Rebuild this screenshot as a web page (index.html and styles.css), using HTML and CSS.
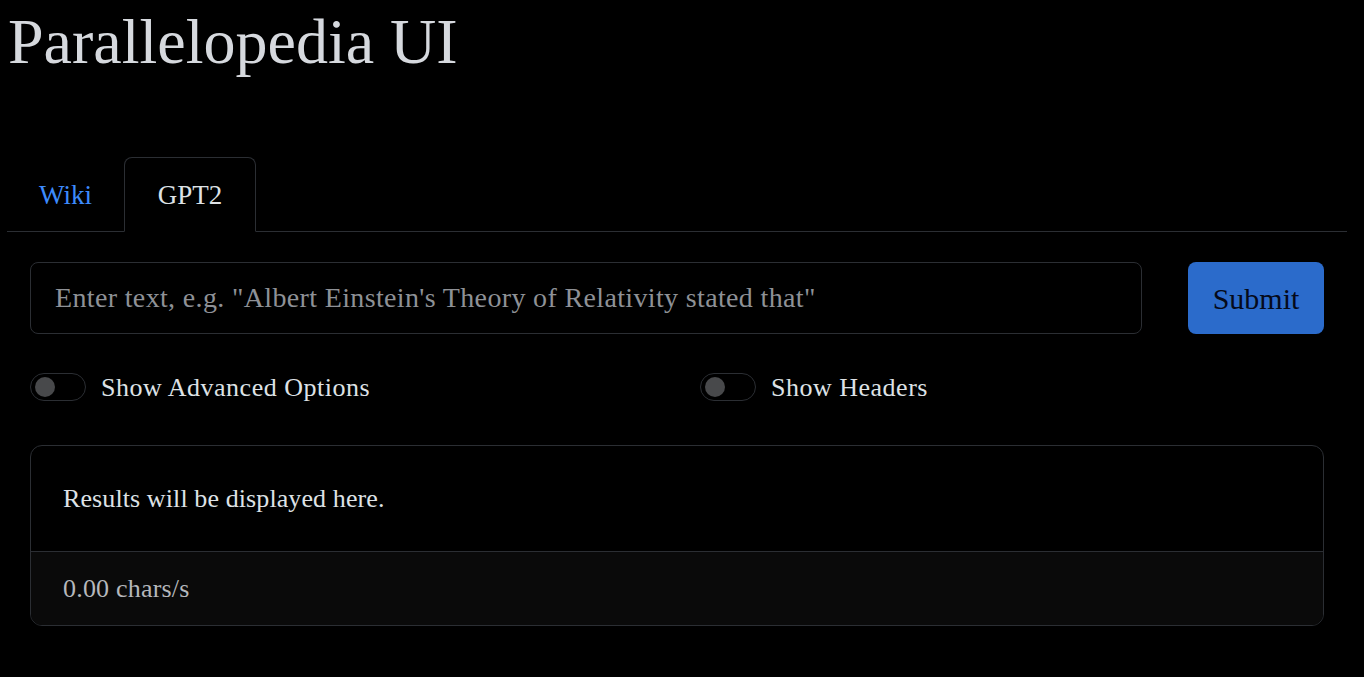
FILE: index.html
```
<!DOCTYPE html>
<html lang="en">
<head>
<meta charset="utf-8">
<title>Parallelopedia UI</title>
<link rel="stylesheet" href="styles.css">
</head>
<body>
<div class="page">
  <h1 class="title">Parallelopedia UI</h1>
  <nav class="tabs">
    <a class="tab" href="#">Wiki</a>
    <a class="tab tab-active" href="#">GPT2</a>
  </nav>
  <section class="panel">
    <div class="query-row">
      <div class="query-input">Enter text, e.g. "Albert Einstein's Theory of Relativity stated that"</div>
      <button class="submit">Submit</button>
    </div>
    <div class="switch-row">
      <label class="switch"><span class="track"><span class="knob"></span></span><span class="switch-label">Show Advanced Options</span></label>
      <label class="switch"><span class="track"><span class="knob"></span></span><span class="switch-label">Show Headers</span></label>
    </div>
    <div class="card">
      <div class="card-body">Results will be displayed here.</div>
      <div class="card-footer">0.00 chars/s</div>
    </div>
  </section>
</div>
</body>
</html>
```
FILE: styles.css
```
html, body {
  margin: 0;
  padding: 0;
  background: #000;
}
body {
  font-family: "Liberation Serif", "DejaVu Serif", serif;
  color: #dee2e6;
}
.page {
  padding: 0 17px 0 7px;
}
.title {
  margin: 0;
  padding: 0 0 0 1px;
  font-weight: 400;
  font-size: 64px;
  line-height: 84px;
  color: #d6d9de;
  height: 157px;
  box-sizing: border-box;
}
.tabs {
  display: flex;
  border-bottom: 1px solid #2b2e33;
  height: 74px;
}
.tab {
  display: flex;
  align-items: center;
  justify-content: center;
  font-size: 27px;
  color: #3d8bfd;
  text-decoration: none;
  border: 1px solid transparent;
  border-radius: 8px 8px 0 0;
  margin-bottom: -1px;
  width: 117px;
  padding: 2px 0 0;
  box-sizing: border-box;
}
.tab-active {
  width: 132px;
  color: #dee2e6;
  border-color: #2b2e33 #2b2e33 #000;
  background: #000;
}
.panel {
  padding: 30px 23px 0 23px;
}
.query-row {
  display: flex;
  gap: 46px;
  height: 72px;
}
.query-input {
  flex: 1;
  display: flex;
  align-items: center;
  padding: 0 24px;
  border: 1px solid #2b2e33;
  border-radius: 8px;
  font-size: 28px;
  letter-spacing: 0.35px;
  color: #8e9196;
  white-space: nowrap;
  overflow: hidden;
}
.submit {
  width: 136px;
  border: none;
  border-radius: 8px;
  background: #2b6bcb;
  color: #050a1a;
  font-family: inherit;
  font-size: 30px;
  padding: 2px 0 0;
}
.switch-row {
  display: flex;
  margin-top: 38px;
  height: 29px;
}
.switch {
  flex: none;
  display: flex;
  align-items: center;
  gap: 15px;
  width: 670px;
  font-size: 26px;
  letter-spacing: 0.5px;
  color: #dee2e6;
}
.track {
  height: 26px;
  border: 1px solid #2b2e33;
  border-radius: 14px;
  display: flex;
  align-items: center;
  padding-left: 4px;
  box-sizing: content-box;
  width: 50px;
}
.knob {
  width: 20px;
  height: 20px;
  border-radius: 50%;
  background: #48494b;
}
.switch-label {
  padding-top: 2px;
}
.card {
  margin-top: 44px;
  border: 1px solid #2b2e33;
  border-radius: 12px;
  overflow: hidden;
}
.card-body {
  height: 105px;
  padding: 0 32px;
  display: flex;
  align-items: center;
  font-size: 26px;
  letter-spacing: 0.1px;
  color: #dee2e6;
  border-bottom: 1px solid #2b2e33;
}
.card-footer {
  height: 73px;
  padding: 0 32px;
  display: flex;
  align-items: center;
  font-size: 26px;
  letter-spacing: 0.2px;
  background: #0a0a0a;
  color: #b5b8bc;
}
```
